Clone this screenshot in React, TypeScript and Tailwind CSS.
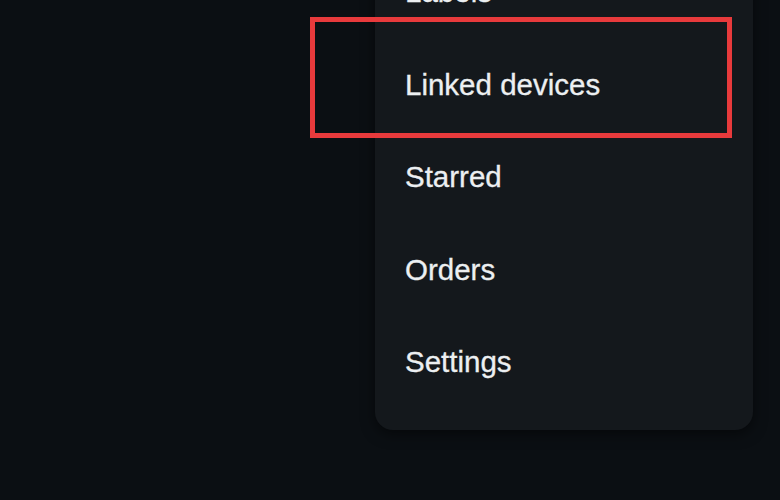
import React from "react";

const items = ["Labels", "Linked devices", "Starred", "Orders", "Settings"];

const App: React.FC = () => {
    return (
        <div
            className="relative w-[780px] h-[500px] overflow-hidden bg-[#0b0f13]"
            style={{ fontFamily: '"Liberation Sans", Arial, sans-serif' }}
        >
            {/* menu panel, top part scrolled out of view */}
            <div className="ml-[375px] -mt-[54px] w-[378px] rounded-b-[18px] bg-[#14181c] pb-[21px] shadow-[0_4px_14px_rgba(0,0,0,0.5)]">
                {items.map((label) => (
                    <div
                        key={label}
                        className="flex h-[92.5px] items-center pl-[30px] text-[29.5px] text-[#eceff1] [-webkit-text-stroke:0.3px_#eceff1]"
                    >
                        {label}
                    </div>
                ))}
            </div>

            {/* highlight frame */}
            <div className="absolute left-[310px] top-[17px] h-[121px] w-[422px] border-[5px] border-[#e83a3c]" />
        </div>
    );
};

export default App;
